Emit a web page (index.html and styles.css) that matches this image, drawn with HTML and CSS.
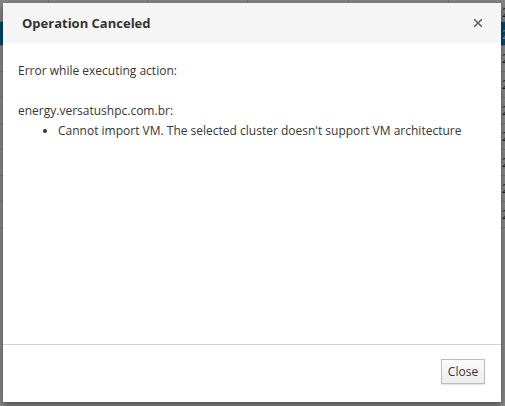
FILE: index.html
```html
<!DOCTYPE html>
<html>
<head>
<meta charset="utf-8">
<link rel="stylesheet" href="styles.css">
</head>
<body>
<div class="table">
  <div class="row"><span></span><span></span><span></span><span></span><span></span><span></span><span class="val">20</span></div>
  <div class="row sel"><span></span><span></span><span></span><span></span><span></span><span></span><span class="val">20</span></div>
  <div class="row"><span></span><span></span><span></span><span></span><span></span><span></span><span class="val">20</span></div>
  <div class="row"><span></span><span></span><span></span><span></span><span></span><span></span><span class="val">20</span></div>
  <div class="row"><span></span><span></span><span></span><span></span><span></span><span></span><span class="val">20</span></div>
  <div class="row"><span></span><span></span><span></span><span></span><span></span><span></span><span class="val">20</span></div>
  <div class="row"><span></span><span></span><span></span><span></span><span></span><span></span><span class="val">20</span></div>
  <div class="row"><span></span><span></span><span></span><span></span><span></span><span></span><span class="val">20</span></div>
  <div class="row"><span></span><span></span><span></span><span></span><span></span><span></span><span class="val">20</span></div>
</div>
<div class="backdrop"></div>
<div class="modal">
  <div class="modal-header">
    <h4 class="title">Operation Canceled</h4>
    <button class="x" aria-label="Close">
      <svg width="10" height="10" viewBox="0 0 10 10"><path d="M1.2 1.2L8.8 8.8M8.8 1.2L1.2 8.8" stroke="#5f6266" stroke-width="1.6" fill="none"/></svg>
    </button>
  </div>
  <div class="modal-body">
    <p class="intro">Error while executing action:</p>
    <p class="host">energy.versatushpc.com.br:</p>
    <ul class="errors">
      <li>Cannot import VM. The selected cluster doesn't support VM architecture</li>
    </ul>
  </div>
  <div class="modal-footer">
    <button class="btn">Close</button>
  </div>
</div>
</body>
</html>
```

FILE: styles.css
```css
html, body {
  margin: 0;
  padding: 0;
  width: 505px;
  height: 406px;
  overflow: hidden;
  background: #ffffff;
  font-family: "Open Sans", "Liberation Sans", sans-serif;
}

.table {
  display: flex;
  flex-direction: column;
  width: 505px;
}

.row {
  display: grid;
  grid-template-columns: 49px 99px 100px 101px 100px 52px 1fr;
  height: 25px;
  border-bottom: 1px solid #d1d1d1;
  background: #ffffff;
}

.row:first-child {
  height: 21px;
  background: #f5f5f5;
}

.row.sel {
  background: #0088ce;
  height: 23px;
}

.row span {
  border-right: 1px solid #d1d1d1;
}

.row .val {
  border-right: none;
  font-size: 12px;
  line-height: 25px;
  color: #363636;
  padding-left: 1px;
}

.row.sel .val {
  color: #ffffff;
}

.backdrop {
  position: absolute;
  inset: 0;
  background: rgba(0, 0, 0, 0.45);
}

.modal {
  position: absolute;
  left: 3px;
  top: 3px;
  width: 498px;
  height: 399px;
  background: #ffffff;
  box-shadow: 0 3px 8px rgba(0, 0, 0, 0.5);
  display: flex;
  flex-direction: column;
  color: #363636;
}

.modal-header {
  height: 40px;
  background: #f5f5f5;
  display: flex;
  align-items: center;
  justify-content: space-between;
  padding: 0 18px 0 19px;
  box-sizing: border-box;
}

.title {
  margin: 0;
  font-size: 13px;
  font-weight: 700;
  color: #333333;
}

.x {
  border: 0;
  background: none;
  padding: 0;
  width: 10px;
  height: 10px;
  display: flex;
  margin-top: -1px;
}

.modal-body {
  flex: 1;
  padding: 18px 15px 0 15px;
  font-size: 12px;
  line-height: 20px;
}

.intro {
  margin: 0 0 20px 0;
}

.host {
  margin: 0;
}

.errors {
  margin: 0;
  padding-left: 40px;
}

.modal-footer {
  height: 58px;
  border-top: 1px solid #d1d1d1;
  box-sizing: border-box;
  display: flex;
  justify-content: flex-end;
  align-items: flex-start;
  padding: 14px 16px 0 0;
}

.btn {
  font-family: "Open Sans", "Liberation Sans", sans-serif;
  font-size: 12px;
  color: #363636;
  height: 25px;
  width: 44px;
  padding: 0;
  border: 1px solid #bbbbbb;
  background: linear-gradient(#fafafa, #ededed);
  box-shadow: 0 1px 1px rgba(0, 0, 0, 0.1);
}
```
